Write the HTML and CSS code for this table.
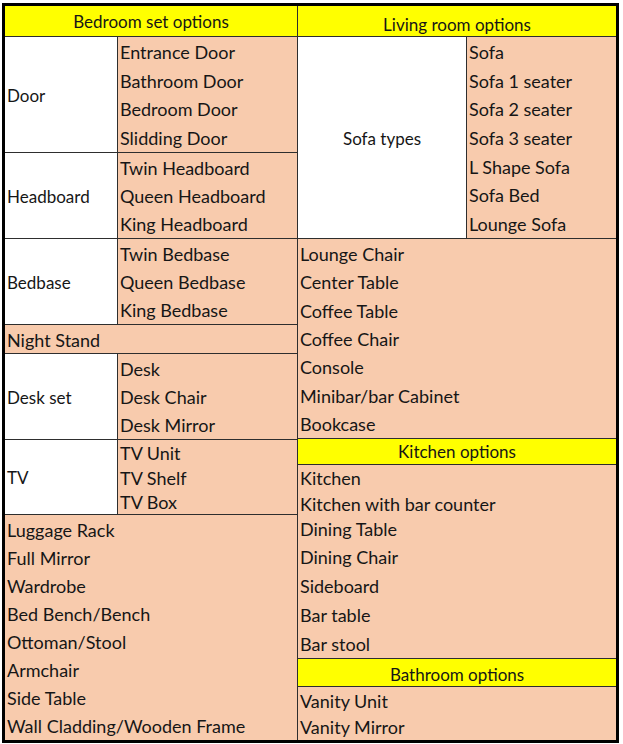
FILE: index.html
```html
<!DOCTYPE html>
<html>
<head>
<meta charset="utf-8">
<link rel="stylesheet" href="styles.css">
</head>
<body>
<div class="sheet">
  <div class="col col-left">
    <div class="hdr hdr-left">Bedroom set options</div>
    <div class="group g-door">
      <div class="label">Door</div>
      <div class="items">
        <div class="row">Entrance Door</div>
        <div class="row">Bathroom Door</div>
        <div class="row">Bedroom Door</div>
        <div class="row">Slidding Door</div>
      </div>
    </div>
    <div class="group g-3">
      <div class="label">Headboard</div>
      <div class="items">
        <div class="row">Twin Headboard</div>
        <div class="row">Queen Headboard</div>
        <div class="row">King Headboard</div>
      </div>
    </div>
    <div class="group g-3">
      <div class="label">Bedbase</div>
      <div class="items">
        <div class="row">Twin Bedbase</div>
        <div class="row">Queen Bedbase</div>
        <div class="row">King Bedbase</div>
      </div>
    </div>
    <div class="single">Night Stand</div>
    <div class="group g-3">
      <div class="label">Desk set</div>
      <div class="items">
        <div class="row">Desk</div>
        <div class="row">Desk Chair</div>
        <div class="row">Desk Mirror</div>
      </div>
    </div>
    <div class="group g-tv">
      <div class="label">TV</div>
      <div class="items">
        <div class="row">TV Unit</div>
        <div class="row">TV Shelf</div>
        <div class="row">TV Box</div>
      </div>
    </div>
    <div class="list l-bed">
      <div class="row">Luggage Rack</div>
      <div class="row">Full Mirror</div>
      <div class="row">Wardrobe</div>
      <div class="row">Bed Bench/Bench</div>
      <div class="row">Ottoman/Stool</div>
      <div class="row">Armchair</div>
      <div class="row">Side Table</div>
      <div class="row">Wall Cladding/Wooden Frame</div>
    </div>
  </div>
  <div class="col col-right">
    <div class="hdr hdr-right">Living room options</div>
    <div class="group g-sofa">
      <div class="label label-center">Sofa types</div>
      <div class="items">
        <div class="row">Sofa</div>
        <div class="row">Sofa 1 seater</div>
        <div class="row">Sofa 2 seater</div>
        <div class="row">Sofa 3 seater</div>
        <div class="row">L Shape Sofa</div>
        <div class="row">Sofa Bed</div>
        <div class="row">Lounge Sofa</div>
      </div>
    </div>
    <div class="list l-living">
      <div class="row">Lounge Chair</div>
      <div class="row">Center Table</div>
      <div class="row">Coffee Table</div>
      <div class="row">Coffee Chair</div>
      <div class="row">Console</div>
      <div class="row">Minibar/bar Cabinet</div>
      <div class="row">Bookcase</div>
    </div>
    <div class="hdr hdr-kitchen">Kitchen options</div>
    <div class="list l-kitchen">
      <div class="row r-short">Kitchen</div>
      <div class="row r-short">Kitchen with bar counter</div>
      <div class="row r-short">Dining Table</div>
      <div class="row">Dining Chair</div>
      <div class="row">Sideboard</div>
      <div class="row">Bar table</div>
      <div class="row">Bar stool</div>
    </div>
    <div class="hdr hdr-bath">Bathroom options</div>
    <div class="list l-bath">
      <div class="row">Vanity Unit</div>
      <div class="row">Vanity Mirror</div>
    </div>
  </div>
</div>
</body>
</html>
```
FILE: styles.css
```css
* { box-sizing: border-box; }
html, body { margin: 0; padding: 0; background: #ffffff; }
body { padding: 3px 0 0 2px; }

.sheet {
  width: 617px;
  height: 740px;
  border: 3px solid #000;
  display: flex;
  background: #f8cbad;
  font-family: "Lato", "Liberation Sans", sans-serif;
  font-size: 18px;
  color: #161616;
}

.col { display: flex; flex-direction: column; }
.col-left { width: 293px; border-right: 1px solid #2e2e2e; }
.col-right { flex: 1; }

.hdr {
  background: #ffff00;
  border-bottom: 1px solid #2e2e2e;
  display: flex;
  justify-content: center;
  align-items: center;
  height: 31px;
  font-size: 17px;
}
.hdr-right { align-items: flex-end; padding-bottom: 1px; }
.hdr-kitchen { height: 26px; }
.hdr-bath { height: 28px; padding-top: 3px; }

.group { display: flex; border-bottom: 1px solid #2e2e2e; }
.label {
  background: #ffffff;
  border-right: 1px solid #2e2e2e;
  display: flex;
  align-items: center;
  padding-left: 2px;
  padding-top: 1px;
  font-size: 17px;
}
.col-left .label { width: 113px; }
.label-center { width: 169px; justify-content: center; padding-left: 0; }
.items { flex: 1; display: flex; flex-direction: column; }

.row {
  flex: 1;
  display: flex;
  align-items: center;
  padding: 1px 0 0 2px;
  white-space: nowrap;
}

.g-door { height: 116px; }
.g-3 { height: 86px; }
.g-tv { height: 75px; }
.g-sofa { height: 202px; }

.single {
  height: 29px;
  border-bottom: 1px solid #2e2e2e;
  display: flex;
  align-items: center;
  padding: 1px 0 0 2px;
}

.list { display: flex; flex-direction: column; }
.l-bed { flex: 1; }
.l-living { height: 200px; border-bottom: 1px solid #2e2e2e; }
.l-kitchen { height: 194px; border-bottom: 1px solid #2e2e2e; }
.l-kitchen .row { flex: 0 0 29px; }
.l-kitchen .r-short { flex: 0 0 25.6px; }
.l-bath { flex: 1; }
```
